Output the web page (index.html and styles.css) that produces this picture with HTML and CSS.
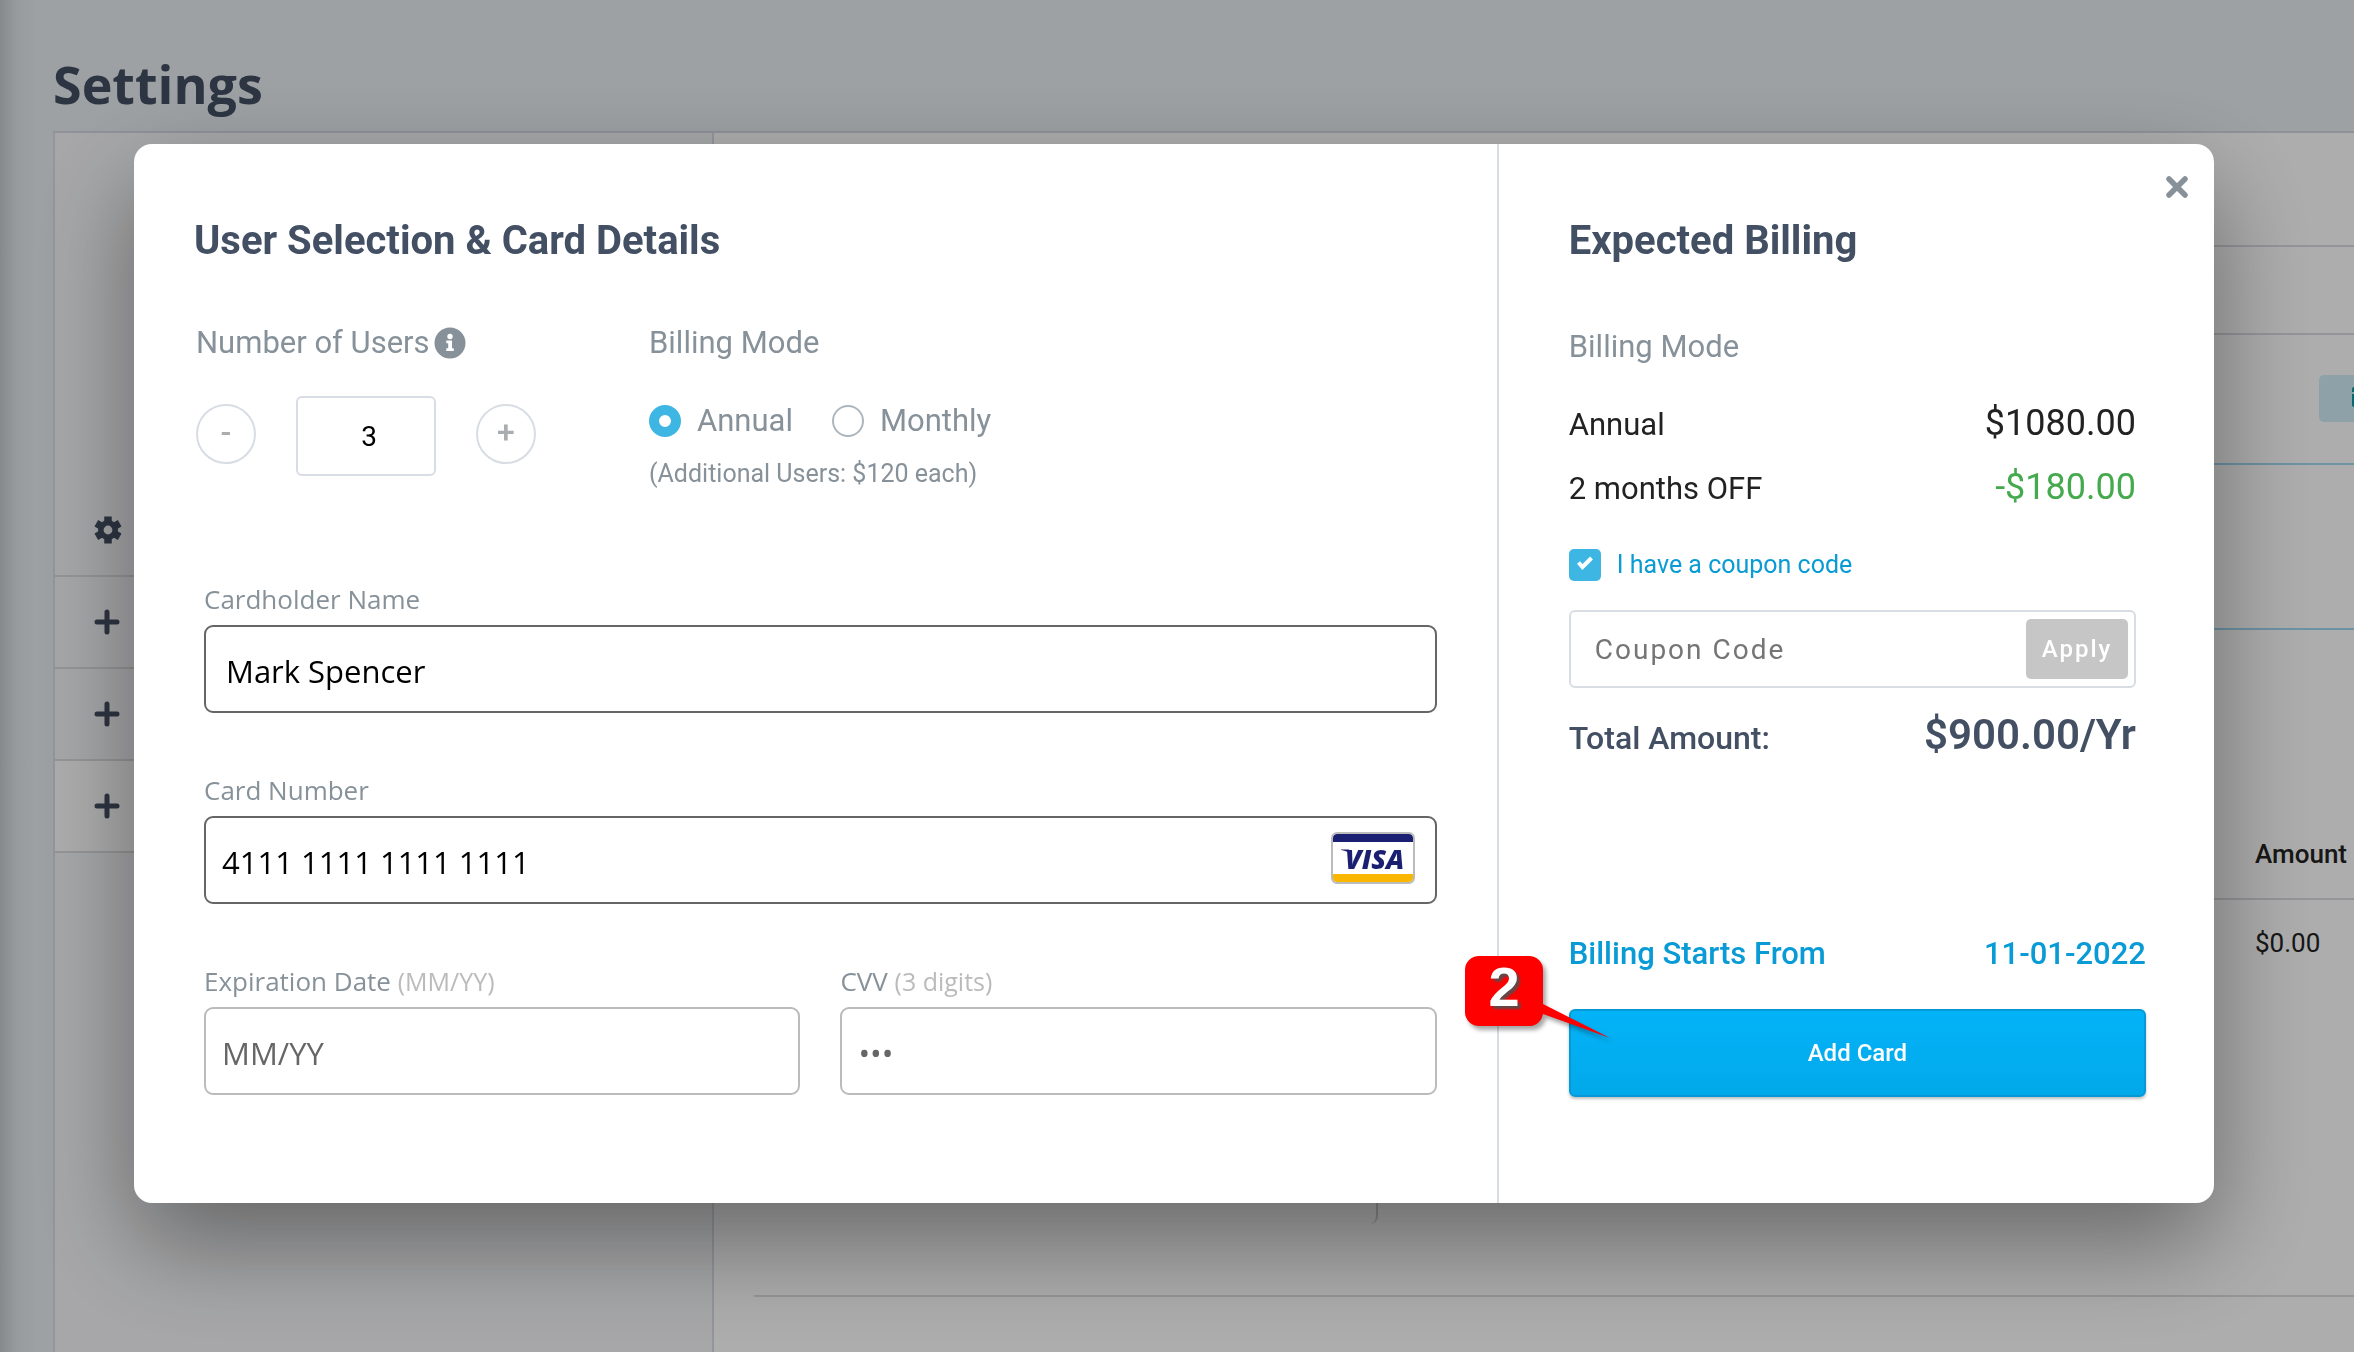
FILE: index.html
```html
<!DOCTYPE html>
<html lang="en">
<head>
    <meta charset="UTF-8">
    <meta name="viewport" content="width=device-width, initial-scale=1.0">
    <title>Settings</title>
    <link rel="stylesheet" href="styles.css">
</head>
<body>
    <!-- Settings page behind the dialog -->
    <main class="page">
        <h1>Settings</h1>
        <div class="panel">
            <nav class="sidebar">
                <button type="button" class="side-item" aria-label="General">
                    <svg width="28" height="28" viewBox="0 0 28 28" fill="none" stroke="currentColor">
                        <circle cx="14" cy="14" r="7.200" stroke-width="5.600"/>
                        <path stroke-width="7.500" d="M14 5.500V0.500M14 22.500v5M6.600 9.700L2.300 7.300M21.400 9.700l4.300-2.400M6.600 18.300l-4.300 2.400M21.400 18.300l4.300 2.400"/>
                    </svg>
                </button>
                <button type="button" class="side-item" aria-label="Expand">
                    <svg width="26" height="26" viewBox="0 0 26 26"><path stroke="currentColor" stroke-width="5" stroke-linecap="round" d="M13 3v20M3 13h20"/></svg>
                </button>
                <button type="button" class="side-item" aria-label="Expand">
                    <svg width="26" height="26" viewBox="0 0 26 26"><path stroke="currentColor" stroke-width="5" stroke-linecap="round" d="M13 3v20M3 13h20"/></svg>
                </button>
                <button type="button" class="side-item active" aria-label="Expand">
                    <svg width="26" height="26" viewBox="0 0 26 26"><path stroke="currentColor" stroke-width="5" stroke-linecap="round" d="M13 3v20M3 13h20"/></svg>
                </button>
            </nav>
            <section class="content">
                <div class="content-head"></div>
                <div class="content-tabs"></div>
                <div class="content-tools">
                    <button type="button" class="tool-btn" aria-label="Billing calendar">
                        <svg width="24" height="24" viewBox="0 0 24 24"><path fill="currentColor" d="M2 2h20a2 2 0 0 1 2 2v3H0V4a2 2 0 0 1 2-2zM0 9h24v11a2 2 0 0 1-2 2H2a2 2 0 0 1-2-2z"/></svg>
                    </button>
                </div>
                <div class="content-plan"></div>
                <table class="invoices">
                    <thead><tr><th>Amount</th></tr></thead>
                    <tbody><tr><td>$0.00</td></tr></tbody>
                </table>
                <div class="content-card"></div>
                <hr>
            </section>
        </div>
    </main>

    <!-- Billing dialog -->
    <div class="overlay">
        <form class="modal" role="dialog" aria-labelledby="dialogTitle">
            <section class="details">
                <h2 id="dialogTitle">User Selection &amp; Card Details</h2>

                <div class="selection">
                    <div class="users">
                        <div class="users-label">
                            <label class="caption" for="userCount">Number of Users</label>
                            <svg width="32" height="32" viewBox="0 0 32 32">
                                <circle cx="16" cy="16" r="15.500" fill="currentColor"/>
                                <circle cx="16" cy="9.500" r="2.700" fill="#fff"/>
                                <path fill="#fff" d="M12.300 13.500h5.700v7.800h1.800v2.700h-7.500v-2.700h1.900v-5.100h-1.900z"/>
                            </svg>
                        </div>
                        <div class="stepper">
                            <button type="button" class="round" aria-label="Remove user">-</button>
                            <input type="text" id="userCount" value="3">
                            <button type="button" class="round" aria-label="Add user">+</button>
                        </div>
                    </div>
                    <div role="radiogroup" aria-labelledby="modeLabel">
                        <div class="caption" id="modeLabel">Billing Mode</div>
                        <div class="modes">
                            <label class="mode"><input type="radio" name="mode" checked>Annual</label>
                            <label class="mode"><input type="radio" name="mode">Monthly</label>
                        </div>
                        <p class="note">(Additional Users: $120 each)</p>
                    </div>
                </div>

                <div class="fields">
                    <div class="field wide">
                        <label for="holder">Cardholder Name</label>
                        <input type="text" id="holder" class="filled holder" value="Mark Spencer">
                    </div>
                    <div class="field wide card-number">
                        <label for="cardNumber">Card Number</label>
                        <input type="text" id="cardNumber" class="filled" value="4111 1111 1111 1111">
                        <svg class="visa" width="84" height="52" viewBox="0 0 84 52">
                            <rect x="1" y="1" width="82" height="50" rx="5" fill="#fff"/>
                            <path fill="#1a1f71" d="M2 10V6a4 4 0 0 1 4-4h72a4 4 0 0 1 4 4v4z"/>
                            <path fill="#f9b700" d="M2 42v4a4 4 0 0 0 4 4h72a4 4 0 0 0 4-4v-4z"/>
                            <rect x="1" y="1" width="82" height="50" rx="5" fill="none" stroke="#bbb" stroke-width="2"/>
                            <path fill="#1a1f71" d="M10 17.500h8l2 6c-2-3-5-5-10-5.500z"/>
                            <text x="14" y="37">VISA</text>
                        </svg>
                    </div>
                    <div class="field">
                        <label for="expiry">Expiration Date <small>(MM/YY)</small></label>
                        <input type="text" id="expiry" placeholder="MM/YY">
                    </div>
                    <div class="field">
                        <label for="cvv">CVV <small>(3 digits)</small></label>
                        <input type="text" id="cvv" placeholder="•••">
                    </div>
                </div>
            </section>

            <section class="billing">
                <button type="button" class="close" aria-label="Close">
                    <svg width="24" height="24" viewBox="0 0 24 24"><path stroke="currentColor" stroke-width="5.500" stroke-linecap="round" d="M4 4l16 16M20 4L4 20"/></svg>
                </button>
                <h2>Expected Billing</h2>
                <div class="summary">
                    <div class="caption">Billing Mode</div>
                    <div class="row first"><span>Annual</span><span class="price">$1080.00</span></div>
                    <div class="row"><span>2 months OFF</span><span class="price discount">-$180.00</span></div>
                    <label class="coupon-toggle"><input type="checkbox" checked>I have a coupon code</label>
                    <div class="coupon">
                        <input type="text" placeholder="Coupon Code" aria-label="Coupon Code">
                        <button type="button">Apply</button>
                    </div>
                    <div class="row total"><span>Total Amount:</span><span class="total-price">$900.00/Yr</span></div>
                </div>
                <div class="starts"><span>Billing Starts From</span><span>11-01-2022</span></div>
                <div class="submit">
                    <button type="submit">Add Card</button>
                    <!-- Step marker pointing at the button -->
                    <svg class="marker" width="156" height="96" viewBox="0 0 156 96">
                        <path class="marker-shape" d="M14 0h50a14 14 0 0 1 14 14v34l67 34-67-24a14 14 0 0 1-14 12H14a14 14 0 0 1-14-14V14a14 14 0 0 1 14-14z"/>
                        <text x="39" y="50" text-anchor="middle">2</text>
                    </svg>
                </div>
            </section>
        </form>
    </div>
</body>
</html>
```

FILE: styles.css
```css
* {
    box-sizing: border-box;
    margin: 0;
    padding: 0;
}

body {
    font-family: Roboto, "Liberation Sans", sans-serif;
    color: #222;
    background-color: #e7edf1;
    overflow: hidden;
}

button, input {
    font: inherit;
}

button {
    border: none;
    cursor: pointer;
}

/* Page */
.page {
    display: flex;
    flex-direction: column;
    height: 100vh;
    padding: 48px 0 0 53px;
    background: linear-gradient(to right, rgba(0, 0, 0, 0.14), rgba(0, 0, 0, 0.04) 16px, transparent 36px);
}

h1 {
    font-family: "Open Sans", "Noto Sans", sans-serif;
    font-size: 52px;
    line-height: 72px;
    color: #434f63;
}

.panel {
    display: flex;
    flex: 1;
    margin-top: 11px;
    min-height: 0;
    border-top: 2px solid #d3d9e2;
    border-left: 2px solid #d8dee7;
}

.sidebar {
    width: 659px;
    padding-top: 352px;
    background-color: #f6f7f9;
    border-right: 2px solid #d8dee7;
}

.side-item {
    display: flex;
    align-items: center;
    width: 100%;
    height: 92px;
    padding-left: 39px;
    background: none;
    border-bottom: 2px solid #dcdddf;
    color: #434f63;
}

.side-item.active {
    background-color: #fff;
}

.content {
    flex: 1;
    background-color: #fff;
}

.content-head {
    height: 114px;
    border-bottom: 2px solid #dadce2;
}

.content-tabs {
    height: 88px;
    border-bottom: 2px solid #dadce2;
}

.content-tools {
    display: flex;
    justify-content: flex-end;
    height: 128px;
    padding-top: 40px;
}

.tool-btn {
    flex: none;
    width: 90px;
    height: 47px;
    margin-right: -55px;
    border-radius: 5px;
    background-color: #d3edf8;
    color: #0c9aa8;
}

.content-plan {
    height: 167px;
    border: solid #a0d8f2;
    border-width: 2px 0;
}

.invoices {
    width: 200px;
    margin: 191px 0 0 auto;
    border-collapse: collapse;
    font-size: 26px;
    line-height: 36px;
    text-align: left;
}

.invoices th {
    padding: 15px 0 26px 101px;
    border-bottom: 2px solid #dadce2;
    font-weight: 500;
}

.invoices td {
    padding: 25px 0 25px 101px;
}

.content-card {
    width: 624px;
    height: 238px;
    margin-left: 40px;
    border-right: 2px solid #d0d0d0;
    border-radius: 8px;
}

.content hr {
    margin: 71px 0 0 40px;
    border: none;
    border-top: 2px solid #ddd;
}

/* Dialog */
.overlay {
    position: fixed;
    inset: 0;
    padding: 144px 140px 0 134px;
    background-color: rgba(0, 0, 0, 0.32);
}

.modal {
    display: grid;
    grid-template-columns: 19fr 10fr;
    background-color: #fff;
    border-radius: 18px;
    box-shadow: 0 40px 100px rgba(0, 0, 0, 0.4);
}

h2 {
    font-size: 40px;
    line-height: 48px;
    font-weight: 700;
    color: #434f63;
}

.details {
    padding: 73px 60px 108px;
}

.caption {
    font-size: 31px;
    line-height: 40px;
    color: #869199;
}

.selection {
    display: flex;
    margin-top: 58px;
    padding-left: 2px;
}

.users {
    width: 453px;
}

.users-label {
    display: flex;
    align-items: center;
    gap: 4px;
    color: #869199;
}

.stepper {
    display: flex;
    align-items: center;
    gap: 40px;
    margin-top: 33px;
}

.round {
    width: 60px;
    height: 60px;
    margin-bottom: 4px;
    padding-bottom: 4px;
    border: 2px solid #d8dde4;
    border-radius: 50%;
    background: none;
    font-size: 32px;
    line-height: 48px;
    font-weight: 500;
    color: #aaadaf;
}

.stepper input {
    width: 140px;
    height: 80px;
    padding-left: 6px;
    border: 2px solid #d8dde4;
    border-radius: 6px;
    font-size: 28px;
    text-align: center;
}

.modes {
    display: flex;
    gap: 39px;
    margin-top: 38px;
}

.mode {
    display: flex;
    align-items: center;
    gap: 16px;
    font-size: 31px;
    line-height: 40px;
    color: #869199;
}

.mode input {
    appearance: none;
    width: 32px;
    height: 32px;
    border: 2px solid #aeb6bd;
    border-radius: 50%;
}

.mode input:checked {
    border: 10px solid #3eb6e4;
}

.note {
    margin-top: 17px;
    font-size: 25px;
    line-height: 32px;
    color: #869199;
}

.fields {
    display: grid;
    grid-template-columns: 1fr 1fr;
    gap: 57px 40px;
    margin-top: 89px;
    padding-left: 10px;
    font-family: "Open Sans", "Noto Sans", sans-serif;
}

.wide {
    grid-column: span 2;
}

.field label {
    display: block;
    margin-bottom: 6px;
    font-size: 26px;
    line-height: 40px;
    color: #869199;
}

.field small {
    font-size: 25px;
    color: #bbb;
}

.field input {
    display: block;
    width: 100%;
    height: 88px;
    padding: 4px 16px 0;
    border: 2px solid #bbb;
    border-radius: 9px;
    font-size: 31px;
}

.field .filled {
    border-color: #666;
}

.field .holder {
    padding-left: 20px;
}

.field input::placeholder {
    color: #666;
}

.card-number {
    position: relative;
}

.visa {
    position: absolute;
    right: 22px;
    bottom: 20px;
}

.visa text {
    font-family: "Open Sans", sans-serif;
    font-size: 27px;
    font-style: italic;
    font-weight: 800;
    fill: #1a1f71;
}

.billing {
    position: relative;
    display: flex;
    flex-direction: column;
    padding: 73px 68px 106px 70px;
    border-left: 2px solid #d8dde4;
}

.close {
    position: absolute;
    top: 31px;
    right: 25px;
    width: 24px;
    height: 24px;
    background: none;
    color: #869199;
}

.close svg {
    display: block;
}

.summary {
    margin: 62px 10px 0 0;
}

.row {
    display: flex;
    justify-content: space-between;
    align-items: baseline;
    margin-top: 14px;
    font-size: 31px;
    line-height: 48px;
}

.row.first {
    margin-top: 32px;
}

.price {
    font-size: 36px;
}

.discount {
    color: #45a94e;
}

.coupon-toggle {
    display: flex;
    align-items: center;
    gap: 16px;
    margin-top: 36px;
    font-size: 25px;
    line-height: 32px;
    color: #089bd5;
}

.coupon-toggle input {
    appearance: none;
    width: 32px;
    height: 32px;
    border-radius: 5px;
    background: #3eb6e4 url("data:image/svg+xml,%3Csvg xmlns='http://www.w3.org/2000/svg' viewBox='0 0 32 32'%3E%3Cpath fill='none' stroke='%23fff' stroke-width='4' d='M9.500 13.500l4 4.500L22.500 9'/%3E%3C/svg%3E");
}

.coupon {
    display: flex;
    align-items: center;
    height: 78px;
    margin-top: 29px;
    padding-right: 6px;
    border: 2px solid #d8dde4;
    border-radius: 6px;
    letter-spacing: 2px;
}

.coupon input {
    flex: 1;
    min-width: 0;
    height: 60px;
    padding-left: 24px;
    border: none;
    font-size: 28px;
    letter-spacing: inherit;
}

.coupon input::placeholder {
    color: #757575;
}

.coupon button {
    width: 102px;
    height: 60px;
    border-radius: 5px;
    background-color: #c6c6c6;
    color: #fff;
    font-size: 24px;
    font-weight: 500;
    letter-spacing: inherit;
}

.total {
    margin-top: 23px;
    font-size: 32px;
    font-weight: 500;
    color: #434f63;
}

.total-price {
    font-size: 42px;
    font-weight: 600;
}

.starts {
    display: flex;
    justify-content: space-between;
    margin-top: auto;
    font-size: 31px;
    line-height: 40px;
    font-weight: 500;
    color: #089bd5;
}

.submit {
    position: relative;
    margin-top: 35px;
}

.submit button {
    display: block;
    width: 100%;
    height: 88px;
    border: 2px solid #0699d5;
    border-radius: 6px;
    background: linear-gradient(#03b3f7, #02a9ea);
    box-shadow: 0 2px 3px rgba(0, 0, 0, 0.25);
    color: #fff;
    font-size: 24px;
    font-weight: 500;
}

.marker {
    position: absolute;
    top: -53px;
    left: -104px;
    overflow: visible;
}

.marker-shape {
    fill: #f00;
    filter: drop-shadow(3px 4px 2px rgba(0, 0, 0, 0.35));
}

.marker text {
    font-family: "Liberation Sans", Arial, sans-serif;
    font-size: 56px;
    font-weight: 700;
    fill: #fff;
    filter: drop-shadow(3px 3px 1px rgba(80, 80, 80, 0.9));
}
```
